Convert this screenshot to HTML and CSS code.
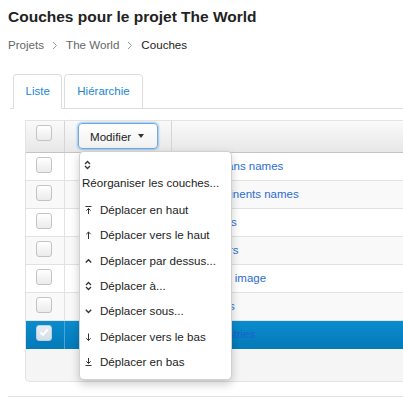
FILE: index.html
```html
<!DOCTYPE html>
<html lang="fr">
<head>
<meta charset="utf-8">
<link rel="stylesheet" href="styles.css">
</head>
<body>
<div class="page">
  <h1 class="title">Couches pour le projet The World</h1>
  <nav class="crumbs">
    <a class="crumb">Projets</a>
    <svg class="sep" width="6" height="9" viewBox="0 0 6 9"><polyline points="1,1 4.5,4.5 1,8" fill="none" stroke="#999" stroke-width="1"/></svg>
    <a class="crumb">The World</a>
    <svg class="sep" width="6" height="9" viewBox="0 0 6 9"><polyline points="1,1 4.5,4.5 1,8" fill="none" stroke="#999" stroke-width="1"/></svg>
    <span class="crumb current">Couches</span>
  </nav>

  <div class="tabs">
    <div class="tab active">Liste</div>
    <div class="tab">Hiérarchie</div>
  </div>

  <div class="content">
    <div class="grid">
      <div class="row head">
        <div class="cell c1"><span class="cb"></span></div>
        <div class="cell c2">
          <button class="btn">Modifier <span class="caret"></span></button>
        </div>
        <div class="cell c3"></div>
      </div>
      <div class="row">
        <div class="cell c1"><span class="cb"></span></div>
        <div class="cell c2"></div>
        <div class="cell c3"><a class="lnk">Oceans names</a></div>
      </div>
      <div class="row odd">
        <div class="cell c1"><span class="cb"></span></div>
        <div class="cell c2"></div>
        <div class="cell c3"><a class="lnk">Continents names</a></div>
      </div>
      <div class="row">
        <div class="cell c1"><span class="cb"></span></div>
        <div class="cell c2"></div>
        <div class="cell c3"><a class="lnk">Lakes</a></div>
      </div>
      <div class="row odd">
        <div class="cell c1"><span class="cb"></span></div>
        <div class="cell c2"></div>
        <div class="cell c3"><a class="lnk">Rivers</a></div>
      </div>
      <div class="row">
        <div class="cell c1"><span class="cb"></span></div>
        <div class="cell c2"></div>
        <div class="cell c3"><a class="lnk">Land image</a></div>
      </div>
      <div class="row odd">
        <div class="cell c1"><span class="cb"></span></div>
        <div class="cell c2"></div>
        <div class="cell c3"><a class="lnk">Cities</a></div>
      </div>
      <div class="row selected">
        <div class="cell c1"><span class="cb checked"><svg width="10" height="9" viewBox="0 0 10 9"><polyline points="1.5,4.5 4,7 8.5,1.5" fill="none" stroke="#fff" stroke-width="2"/></svg></span></div>
        <div class="cell c2"></div>
        <div class="cell c3"><a class="lnk">Countries</a></div>
      </div>
      <div class="foot"></div>
    </div>
  </div>

  <ul class="menu">
    <li class="item first">
      <span class="ic"><svg width="7" height="10" viewBox="0 0 7 10"><polyline points="1,4 3.5,1.5 6,4" fill="none" stroke="#333" stroke-width="1.3"/><polyline points="1,6 3.5,8.5 6,6" fill="none" stroke="#333" stroke-width="1.3"/></svg></span>
      <span class="txt">Réorganiser les couches...</span>
    </li>
    <li class="item">
      <span class="ic"><svg width="7" height="10" viewBox="0 0 7 10"><line x1="0.5" y1="1.5" x2="6.5" y2="1.5" stroke="#333" stroke-width="1"/><line x1="3.5" y1="3.5" x2="3.5" y2="9" stroke="#333" stroke-width="1"/><polyline points="1.3,5.7 3.5,3.5 5.7,5.7" fill="none" stroke="#333" stroke-width="1"/></svg></span>
      <span class="txt">Déplacer en haut</span>
    </li>
    <li class="item">
      <span class="ic"><svg width="7" height="10" viewBox="0 0 7 10"><line x1="3.5" y1="2" x2="3.5" y2="9" stroke="#333" stroke-width="1"/><polyline points="1.3,4.2 3.5,2 5.7,4.2" fill="none" stroke="#333" stroke-width="1"/></svg></span>
      <span class="txt">Déplacer vers le haut</span>
    </li>
    <li class="item">
      <span class="ic"><svg width="7" height="10" viewBox="0 0 7 10"><polyline points="0.8,6.5 3.5,3.8 6.2,6.5" fill="none" stroke="#333" stroke-width="1.4"/></svg></span>
      <span class="txt">Déplacer par dessus...</span>
    </li>
    <li class="item">
      <span class="ic"><svg width="7" height="10" viewBox="0 0 7 10"><polyline points="1,4 3.5,1.5 6,4" fill="none" stroke="#333" stroke-width="1.3"/><polyline points="1,6 3.5,8.5 6,6" fill="none" stroke="#333" stroke-width="1.3"/></svg></span>
      <span class="txt">Déplacer à...</span>
    </li>
    <li class="item">
      <span class="ic"><svg width="7" height="10" viewBox="0 0 7 10"><polyline points="0.8,3.8 3.5,6.5 6.2,3.8" fill="none" stroke="#333" stroke-width="1.4"/></svg></span>
      <span class="txt">Déplacer sous...</span>
    </li>
    <li class="item">
      <span class="ic"><svg width="7" height="10" viewBox="0 0 7 10"><line x1="3.5" y1="1.5" x2="3.5" y2="8.5" stroke="#333" stroke-width="1"/><polyline points="1.3,6.3 3.5,8.5 5.7,6.3" fill="none" stroke="#333" stroke-width="1"/></svg></span>
      <span class="txt">Déplacer vers le bas</span>
    </li>
    <li class="item">
      <span class="ic"><svg width="7" height="10" viewBox="0 0 7 10"><line x1="3.5" y1="1" x2="3.5" y2="6.5" stroke="#333" stroke-width="1"/><polyline points="1.3,4.3 3.5,6.5 5.7,4.3" fill="none" stroke="#333" stroke-width="1"/><line x1="0.5" y1="8.5" x2="6.5" y2="8.5" stroke="#333" stroke-width="1"/></svg></span>
      <span class="txt">Déplacer en bas</span>
    </li>
  </ul>

  <hr class="rule">
</div>
</body>
</html>
```

FILE: styles.css
```css
* { box-sizing: border-box; }
html, body { margin: 0; padding: 0; }
body {
  font-family: "Liberation Sans", Arial, Helvetica, sans-serif;
  font-size: 11.5px;
  color: #333;
  background: #fff;
  overflow: hidden;
}
.page {
  position: relative;
  width: 403px;
  height: 400px;
  padding-left: 8px;
  overflow: hidden;
}
.title {
  margin: 0;
  padding-top: 6px;
  font-size: 15.5px;
  line-height: 22px;
  font-weight: 700;
  color: #222;
}
.crumbs {
  display: flex;
  align-items: center;
  margin-top: 9px;
  height: 16px;
  line-height: 16px;
  font-size: 11.6px;
}
.crumb { color: #666; text-decoration: none; }
.crumb.current { color: #222; }
.sep { margin: 0 8px; }

.tabs {
  display: flex;
  margin-top: 21px;
  margin-left: 2px;
  padding-left: 3px;
  border-bottom: 1px solid #ddd;
  height: 35px;
  align-items: flex-end;
}
.tab {
  height: 35px;
  margin-right: 2px;
  margin-bottom: -1px;
  padding: 0 11.5px;
  line-height: 33px;
  border: 1px solid #ddd;
  border-radius: 4px 4px 0 0;
  color: #1a87d0;
  background: #fff;
}
.tab + .tab { padding: 0 12px; }
.tab.active { border-bottom-color: #fff; }

.content {
  padding: 11px 0 0 17px;
}
.grid {
  width: 400px;
  border: 1px solid #e3e3e3;
  border-right: 0;
  border-radius: 0 0 0 5px;
  overflow: hidden;
  background: #f5f5f5;
}
.row {
  display: flex;
  height: 28px;
  border-bottom: 1px solid #e2e2e2;
  background: #fff;
}
.row.odd { background: #f9f9f9; }
.row.head {
  height: 32px;
  background: linear-gradient(#fafafa, #e7e7e7);
  border-bottom: 1px solid #c4c4c4;
}
.row.selected {
  background: linear-gradient(#0b8cce, #0479b8);
  border-bottom: 0;
}
.cell {
  border-right: 1px solid #e2e2e2;
}
.head .cell { border-right-color: #d5d5d5; }
.selected .cell { border-right-color: #4aa6d8; }
.c1 {
  width: 39px;
  padding: 4px 0 0 10px;
}
.c2 { width: 107px; padding-left: 13px; }
.c3 {
  flex: 1;
  border-right: 0;
  padding-left: 34px;
  line-height: 26px;
}
.cb {
  display: block;
  width: 16px;
  height: 16px;
  border: 1px solid #c3c3c3;
  border-radius: 3px;
  background: linear-gradient(#ffffff, #ebebeb);
}
.cb.checked {
  border-color: #b9d3e3;
  background: linear-gradient(#e6eef3, #d3dfe7);
  padding: 2px 0 0 2px;
}
.cb.checked svg { display: block; }
.lnk {
  color: #2c6dd4;
  text-decoration: none;
}
.selected .lnk { color: #1d60cc; }
.foot { height: 32px; }

.btn {
  display: flex;
  align-items: center;
  margin-top: 2px;
  width: 80px;
  height: 26px;
  padding: 0 0 0 11px;
  font: inherit;
  font-size: 11.6px;
  color: #222;
  background: linear-gradient(#ffffff, #f1f1f1);
  border: 1px solid #6fa9e0;
  border-radius: 4px;
  box-shadow: 0 0 2px 1px rgba(90, 160, 230, 0.55);
}
.caret {
  display: inline-block;
  margin-left: 7px;
  width: 0;
  height: 0;
  border-left: 3.5px solid transparent;
  border-right: 3.5px solid transparent;
  border-top: 4px solid #333;
}

.menu {
  position: absolute;
  left: 79px;
  top: 151px;
  width: 153px;
  height: 229px;
  margin: 0;
  padding: 0 0 4px;
  list-style: none;
  background: #fff;
  border: 1px solid rgba(0, 0, 0, 0.18);
  border-radius: 5px;
  box-shadow: 0 4px 10px rgba(0, 0, 0, 0.2);
  font-size: 11.6px;
  color: #222;
}
.item {
  display: flex;
  align-items: center;
  padding: 3.7px 0 3.7px 5px;
  line-height: 18px;
  white-space: nowrap;
}
.item .ic {
  display: flex;
  justify-content: center;
  width: 7px;
  margin-right: 8px;
}
.item.first {
  display: block;
  padding: 4px 0 5.3px 2px;
}
.item.first .ic {
  height: 18px;
  align-items: center;
  margin-left: 2px;
}
.rule {
  margin: 14px 0 0 0;
  border: 0;
  border-top: 1px solid #e3e3e3;
  width: 400px;
}
```
